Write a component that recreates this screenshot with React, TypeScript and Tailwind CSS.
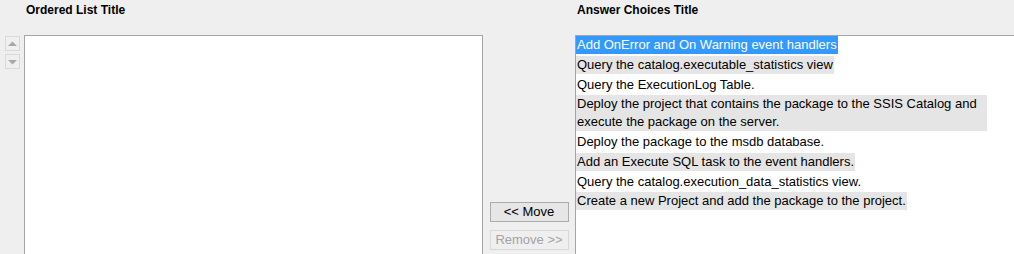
import React from "react";

const items = [
  "Add OnError and On Warning event handlers",
  "Query the catalog.executable_statistics view",
  "Query the ExecutionLog Table.",
  "Deploy the project that contains the package to the SSIS Catalog and execute the package on the server.",
  "Deploy the package to the msdb database.",
  "Add an Execute SQL task to the event handlers.",
  "Query the catalog.execution_data_statistics view.",
  "Create a new Project and add the package to the project.",
];

function Arrow({ up }: { up: boolean }) {
  return (
    <div className="w-[15px] h-[15px] border border-[#d9d9d9] bg-[#efefef] flex items-center justify-center">
      <svg width="9" height="6" viewBox="0 0 9 6">
        {up ? (
          <polygon points="0,5 9,5 4.5,0.5" fill="#a8a8a8" />
        ) : (
          <polygon points="0,1 9,1 4.5,5.5" fill="#a8a8a8" />
        )}
      </svg>
    </div>
  );
}

export default function App() {
  return (
    <div className="w-[1014px] h-[254px] overflow-hidden bg-[#efefef] text-black font-['Liberation_Sans',Arial,sans-serif]">
      <div className="flex">
        <div className="w-[483px] shrink-0">
          <div className="h-[35px] pl-[26px] pt-[3px] text-[12px] leading-[15px] font-bold">
            Ordered List Title
          </div>
          <div className="flex">
            <div className="w-[24px] shrink-0 pl-[5px] pt-[1px] flex flex-col gap-[3px]">
              <Arrow up />
              <Arrow up={false} />
            </div>
            <div className="flex-1 h-[240px] bg-white border border-[#a5a5a5]" />
          </div>
        </div>
        <div className="w-[92px] shrink-0 pt-[202px] flex flex-col items-center gap-[8px]">
          <button className="w-[79px] h-[20px] border border-[#acacac] bg-[#e6e6e6] text-[13px] leading-[18px] text-black">
            &lt;&lt; Move
          </button>
          <button className="w-[79px] h-[20px] border border-[#d8d8d8] bg-[#efefef] text-[13px] leading-[18px] text-[#a3a3a3]">
            Remove &gt;&gt;
          </button>
        </div>
        <div className="flex-1">
          <div className="h-[35px] pl-[2px] pt-[3px] text-[12px] leading-[15px] font-bold">
            Answer Choices Title
          </div>
          <div className="h-[240px] bg-white border-l border-t border-[#a5a5a5]">
            <div className="flex flex-col items-start gap-[1.75px] w-[411px]">
              {items.map((t, i) => (
                <div
                  key={i}
                  className={
                    "w-fit px-[1px] text-[13px] leading-[18px] " +
                    (i === 0
                      ? "bg-[#3399ff] text-white"
                      : i % 2 === 1
                      ? "bg-[#e5e5e5] text-black"
                      : "bg-white text-black")
                  }
                >
                  {t}
                </div>
              ))}
            </div>
          </div>
        </div>
      </div>
    </div>
  );
}
